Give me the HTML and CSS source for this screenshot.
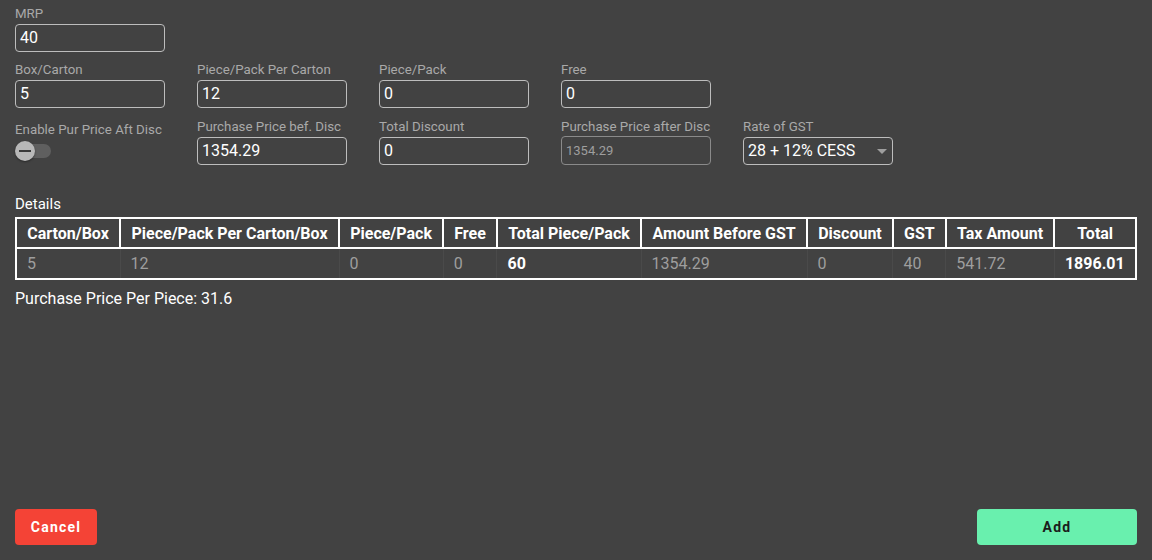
FILE: index.html
```html
<!DOCTYPE html>
<html>
<head>
<meta charset="utf-8">
<link rel="stylesheet" href="styles.css">
</head>
<body>
<div class="page">
  <div class="form">
    <div class="row">
      <div class="field"><label class="lbl">MRP</label><div class="inp">40</div></div>
    </div>
    <div class="row">
      <div class="field"><label class="lbl">Box/Carton</label><div class="inp">5</div></div>
      <div class="field"><label class="lbl">Piece/Pack Per Carton</label><div class="inp">12</div></div>
      <div class="field"><label class="lbl">Piece/Pack</label><div class="inp">0</div></div>
      <div class="field"><label class="lbl">Free</label><div class="inp">0</div></div>
    </div>
    <div class="row row-last">
      <div class="field"><label class="lbl lbl-switch">Enable Pur Price Aft Disc</label>
        <div class="toggle"><span class="track"></span><span class="thumb"><span class="minus"></span></span></div>
      </div>
      <div class="field"><label class="lbl">Purchase Price bef. Disc</label><div class="inp">1354.29</div></div>
      <div class="field"><label class="lbl">Total Discount</label><div class="inp">0</div></div>
      <div class="field"><label class="lbl">Purchase Price after Disc</label><div class="inp disabled">1354.29</div></div>
      <div class="field"><label class="lbl">Rate of GST</label><div class="inp select">28 + 12% CESS<span class="caret"></span></div></div>
    </div>
  </div>

  <div class="details">
    <div class="title">Details</div>
    <table class="tbl">
      <thead>
        <tr>
          <th>Carton/Box</th><th>Piece/Pack Per Carton/Box</th><th>Piece/Pack</th><th>Free</th><th>Total Piece/Pack</th><th>Amount Before GST</th><th>Discount</th><th>GST</th><th>Tax Amount</th><th>Total</th>
        </tr>
      </thead>
      <tbody>
        <tr>
          <td>5</td><td>12</td><td>0</td><td>0</td><td class="strong">60</td><td>1354.29</td><td>0</td><td>40</td><td>541.72</td><td class="strong">1896.01</td>
        </tr>
      </tbody>
    </table>
    <div class="ppp">Purchase Price Per Piece: 31.6</div>
  </div>

  <div class="actions">
    <button class="btn cancel">Cancel</button>
    <button class="btn add">Add</button>
  </div>
</div>
</body>
</html>
```

FILE: styles.css
```css
html, body {
  margin: 0;
  padding: 0;
  background: #424242;
  font-family: Roboto, "Liberation Sans", sans-serif;
  color: #fff;
}
.page {
  height: 560px;
  box-sizing: border-box;
  padding: 6px 15px 15px 15px;
  display: flex;
  flex-direction: column;
}
.form {
  display: flex;
  flex-direction: column;
  gap: 10px;
}
.row {
  display: flex;
  gap: 32px;
}
.row-last {
  margin-top: 1px;
}
.field {
  width: 150px;
  display: flex;
  flex-direction: column;
}
.lbl {
  font-size: 13.3px;
  line-height: 15px;
  color: #a9a9a9;
  margin-bottom: 3px;
  white-space: nowrap;
}
.lbl-switch {
  padding-top: 3px;
  margin-bottom: 4px;
}
.inp {
  box-sizing: border-box;
  height: 28px;
  border: 1px solid #bdbdbd;
  border-radius: 4px;
  padding: 0 4px;
  font-size: 16px;
  line-height: 26px;
  color: #fff;
  position: relative;
}
.inp.disabled {
  color: #9e9e9e;
  font-size: 13px;
  border-color: #8a8a8a;
  height: 29px;
  margin-top: -1px;
  line-height: 27px;
}
.caret {
  position: absolute;
  right: 5px;
  top: 11px;
  width: 0;
  height: 0;
  border-left: 5px solid transparent;
  border-right: 5px solid transparent;
  border-top: 5px solid #9e9e9e;
}
.toggle {
  position: relative;
  width: 36px;
  height: 20px;
}
.track {
  position: absolute;
  left: 3px;
  top: 3px;
  width: 33px;
  height: 14px;
  border-radius: 7px;
  background: #5f5f5f;
}
.thumb {
  position: absolute;
  left: 0;
  top: 0;
  width: 20px;
  height: 20px;
  border-radius: 50%;
  background: #b8b8b8;
  box-shadow: 0 1px 2px rgba(0,0,0,0.4);
  display: flex;
  align-items: center;
  justify-content: center;
}
.minus {
  width: 12px;
  height: 2px;
  background: #3a3a3a;
}
.details {
  margin-top: 30px;
}
.title {
  font-size: 15px;
  line-height: 18px;
  margin-bottom: 4px;
}
.tbl {
  width: 100%;
  border-collapse: collapse;
  border: 2px solid #fff;
  font-size: 16px;
}
.tbl th {
  border: 2px solid #fff;
  font-weight: 700;
  padding: 0 10px;
  height: 28px;
  white-space: nowrap;
  text-align: center;
}
.tbl td {
  border-left: 1px solid #4a4a4a;
  padding: 0 10px;
  height: 29px;
  color: #9e9e9e;
  text-align: left;
  white-space: nowrap;
}
.tbl td.strong {
  color: #fff;
  font-weight: 700;
}
.ppp {
  margin-top: 9px;
  font-size: 16px;
  line-height: 20px;
}
.actions {
  margin-top: auto;
  display: flex;
  justify-content: space-between;
}
.btn {
  border: none;
  border-radius: 4px;
  height: 36px;
  font-family: Roboto, "Liberation Sans", sans-serif;
  font-size: 14px;
  font-weight: 700;
  letter-spacing: 1.2px;
}
.cancel {
  width: 82px;
  background: #f44336;
  color: #fff;
}
.add {
  width: 160px;
  background: #69f0ae;
  color: #1b1b1b;
}
```
